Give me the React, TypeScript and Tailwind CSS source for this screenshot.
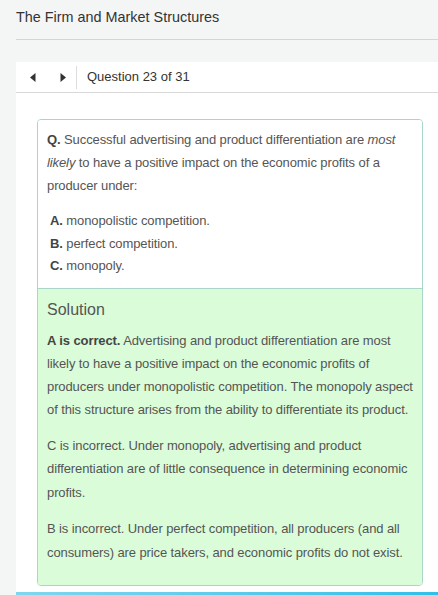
export default function App() {
  return (
    <div className="min-h-[595px] overflow-hidden bg-[#f4f6f6] font-['Liberation_Sans',Arial,sans-serif] text-[#555]">
      {/* Title bar */}
      <div className="ml-4 flex h-[40px] items-center border-b border-[#d3d6d6] pb-[3px] text-[14.4px] text-[#333]">
        The Firm and Market Structures
      </div>

      <div className="ml-4 mt-[22px] bg-white">
        {/* Question nav */}
        <div className="flex h-[31px] items-center border-b border-[#d9d9d9]">
          <button className="ml-[12px] flex h-[20px] w-[10px] items-center justify-center text-[#333]">
            <svg width="6" height="9" viewBox="0 0 6 9">
              <path d="M5.5 0 L0 4.5 L5.5 9 Z" fill="currentColor" />
            </svg>
          </button>
          <button className="ml-[20px] flex h-[20px] w-[10px] items-center justify-center text-[#333]">
            <svg width="6" height="9" viewBox="0 0 6 9">
              <path d="M0.5 0 L6 4.5 L0.5 9 Z" fill="currentColor" />
            </svg>
          </button>
          <div className="ml-[8px] h-[23px] w-px bg-[#ddd]" />
          <span className="ml-[10px] text-[13px] text-[#333]">Question 23 of 31</span>
        </div>

        {/* Card */}
        <div className="pl-[21px] pr-[15px] pt-[26px] pb-[6px]">
          <div className="overflow-hidden rounded-[4px] border border-[#a9d6c9] text-[13px] tracking-[-0.1px]">
            <div className="bg-white px-[9px] pt-[8px] pb-[10px]">
              <p className="leading-[23px]">
                <b className="text-[#444]">Q.</b> Successful advertising and product differentiation are <i>most likely</i> to have a positive impact on the economic profits of a producer under:
              </p>
              <ul className="mt-[13px] pl-[3px] leading-[22.5px]">
                <li><b className="text-[#444]">A.</b> monopolistic competition.</li>
                <li><b className="text-[#444]">B.</b> perfect competition.</li>
                <li><b className="text-[#444]">C.</b> monopoly.</li>
              </ul>
            </div>
            <div className="border-t border-[#a9d6c9] bg-[#dbfcd9] px-[9px] pt-[9px] pb-[21px]">
              <h3 className="text-[16px] leading-[24px] tracking-normal text-[#555]">Solution</h3>
              <p className="mt-[7px] leading-[23px]">
                <b className="text-[#444]">A is correct.</b> Advertising and product differentiation are most likely to have a positive impact on the economic profits of producers under monopolistic competition. The monopoly aspect of this structure arises from the ability to differentiate its product.
              </p>
              <p className="mt-[13px] leading-[23.5px]">
                C is incorrect. Under monopoly, advertising and product differentiation are of little consequence in determining economic profits.
              </p>
              <p className="mt-[13px] leading-[23.5px]">
                B is incorrect. Under perfect competition, all producers (and all consumers) are price takers, and economic profits do not exist.
              </p>
            </div>
          </div>
        </div>
        <div className="h-[3px] bg-gradient-to-r from-[#7fd6ee] to-[#2fbfe8]" />
      </div>
    </div>
  );
}
